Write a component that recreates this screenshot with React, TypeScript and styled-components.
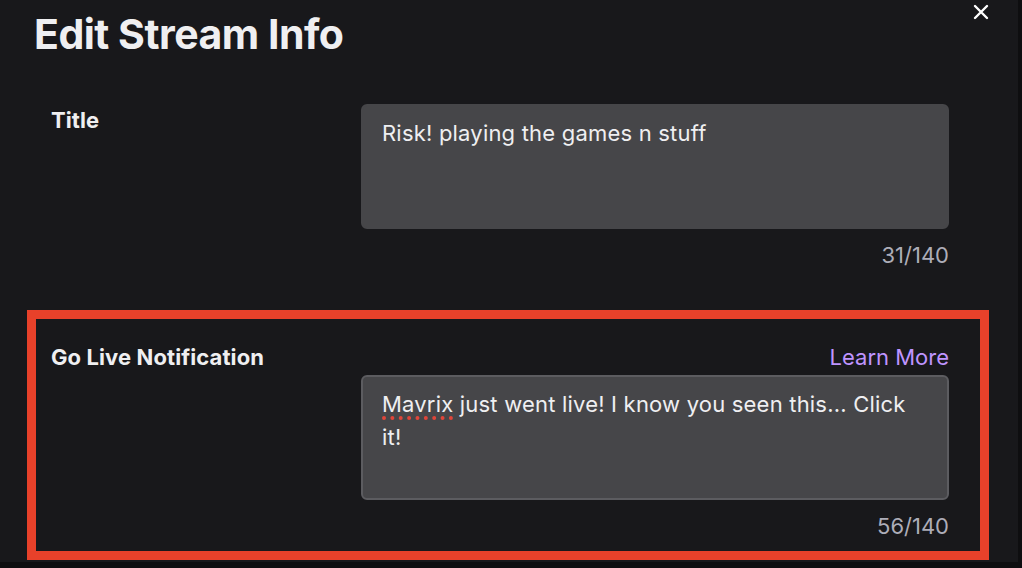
import React from "react";
import styled, { createGlobalStyle } from "styled-components";

const Global = createGlobalStyle`
  html, body {
    margin: 0;
    padding: 0;
    background: #0e0e10;
    width: 1022px;
    height: 568px;
    overflow: hidden;
  }
  * { box-sizing: border-box; }
`;

const Modal = styled.div`
  position: relative;
  width: 1018px;
  height: 562px;
  background: #18181b;
  color: #efeff1;
  font-family: Inter, "Noto Sans", sans-serif;
  overflow: hidden;
`;

const Header = styled.header`
  padding: 10px 0 0 34px;
  height: 73px;
`;

const Heading = styled.h1`
  margin: 0;
  font-size: 41px;
  line-height: 49px;
  font-weight: 700;
  letter-spacing: -0.5px;
  color: #efeff1;
`;

const CloseButton = styled.button`
  position: absolute;
  top: 3px;
  right: 28px;
  width: 18px;
  height: 18px;
  padding: 0;
  border: none;
  background: transparent;
  cursor: pointer;
  display: flex;
  align-items: center;
  justify-content: center;
`;

const Form = styled.div`
  display: flex;
  flex-direction: column;
  gap: 21px;
  padding-left: 27px;
  width: 989px;
`;

const Section = styled.section<{ $highlight?: boolean }>`
  border: 9px solid ${(p) => (p.$highlight ? "#e8412a" : "transparent")};
  padding: 22px 31px 9px 15px;
  display: grid;
  grid-template-columns: 310px 1fr;
`;

const Label = styled.label`
  font-size: 22px;
  line-height: 32px;
  font-weight: 700;
  color: #efeff1;
  letter-spacing: 0.1px;
`;

const Field = styled.div`
  display: flex;
  flex-direction: column;
`;

const FieldTop = styled.div`
  display: flex;
  justify-content: flex-end;
  margin-bottom: 2px;
`;

const LearnMore = styled.a`
  font-size: 22px;
  line-height: 32px;
  color: #bf94ff;
  text-decoration: none;
  cursor: pointer;
`;

const TextBox = styled.div<{ $focused?: boolean }>`
  height: 125px;
  border-radius: 6px;
  background: #464649;
  border: 2px solid ${(p) => (p.$focused ? "#5c5c60" : "#464649")};
  padding: 11px 26px 11px 19px;
  font-size: 22px;
  line-height: 33px;
  letter-spacing: 0.2px;
  color: #efeff1;
  white-space: pre-wrap;
`;

const Misspelled = styled.span`
  text-decoration: underline dotted #e0463a;
  text-decoration-thickness: 4px;
  text-underline-offset: 4px;
`;

const Counter = styled.div`
  margin-top: 10px;
  text-align: right;
  font-size: 22px;
  line-height: 32px;
  color: #adadb8;
`;

export default function App() {
  return (
    <>
      <Global />
      <Modal>
        <Header>
          <Heading>Edit Stream Info</Heading>
        </Header>
        <CloseButton aria-label="Close">
          <svg width="16" height="16" viewBox="0 0 16 16">
            <path d="M2 2 L14 14 M14 2 L2 14" stroke="#ffffff" strokeWidth="2.4" strokeLinecap="round" />
          </svg>
        </CloseButton>
        <Form>
          <Section>
            <Label>Title</Label>
            <Field>
              <TextBox role="textbox">Risk! playing the games n stuff</TextBox>
              <Counter>31/140</Counter>
            </Field>
          </Section>
          <Section $highlight>
            <Label>Go Live Notification</Label>
            <Field>
              <FieldTop>
                <LearnMore>Learn More</LearnMore>
              </FieldTop>
              <TextBox role="textbox" $focused>
                <Misspelled>Mavrix</Misspelled> just went live! I know you seen this... Click it!
              </TextBox>
              <Counter>56/140</Counter>
            </Field>
          </Section>
        </Form>
      </Modal>
    </>
  );
}
